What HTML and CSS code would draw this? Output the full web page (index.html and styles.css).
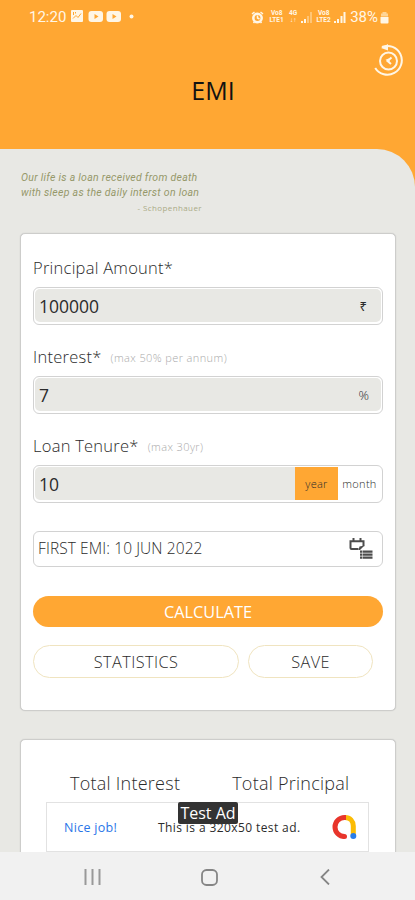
FILE: index.html
```
<!DOCTYPE html>
<html lang="en">

<head>
    <meta charset="UTF-8">
    <meta name="viewport" content="width=device-width, initial-scale=1.0">
    <title>EMI</title>
    <link rel="stylesheet" href="styles.css">
</head>

<body>
    <header class="header">
        <div class="status-bar">
            <span class="time">12:20</span>
            <svg class="status-left" width="66" height="14" viewBox="0 0 66 14">
                <rect x="0" y="1" width="12" height="12" rx="1" fill="#fff6e6"/>
                <path d="M2 9.5l3-3 2 2 3-4M2.500 3v3M4.500 3v1.500" stroke="#ffa733" fill="none"/>
                <rect x="17.500" y="2" width="14.500" height="11" rx="3" fill="#fff6e6"/>
                <path d="M23.500 5v5l4-2.500z" fill="#ffa733"/>
                <rect x="35.500" y="2" width="14.500" height="11" rx="3" fill="#fff6e6"/>
                <path d="M41.500 5v5l4-2.500z" fill="#ffa733"/>
                <circle cx="60.500" cy="7.500" r="2" fill="#fff6e6"/>
            </svg>
            <div class="status-right">
                <svg class="alarm" width="13" height="13" viewBox="0 0 13 13">
                    <circle cx="6.500" cy="7" r="4.200" fill="none" stroke="#fff6e6" stroke-width="2.500"/>
                    <path d="M1 3l2.500-2M12 3L9.500 1M2.500 12l1.500-2M10.500 12L9 10M6.500 4.500V7l2 1" fill="none" stroke="#fff6e6" stroke-width="1.500"/>
                </svg>
                <div class="lte"><span>Vo8</span><span>LTE1</span></div>
                <div class="net"><span>4G</span><span>↓↑</span></div>
                <svg class="signal" width="11" height="12" viewBox="0 0 11 12">
                    <path d="M1 12v-2M4 12V8" stroke="#fff6e6" stroke-width="2"/>
                    <path d="M7 12V5M10 12V1" stroke="#ffd08d" stroke-width="1.500"/>
                </svg>
                <div class="lte"><span>Vo8</span><span>LTE2</span></div>
                <svg class="signal" width="12" height="12" viewBox="0 0 12 12">
                    <path d="M1 12v-2M4 12V8M7.500 12V5M10.500 12V1" stroke="#fff6e6" stroke-width="2"/>
                </svg>
                <span class="percent">38%</span>
                <svg width="9" height="13" viewBox="0 0 9 13">
                    <path d="M2.500 2.500V1h4v1.500H8v3H1v-3z" fill="#ffd596"/>
                    <path d="M0.500 6h8v5.500a1 1 0 0 1-1 1h-6a1 1 0 0 1-1-1z" fill="#fff6e6"/>
                </svg>
            </div>
        </div>
        <h1>EMI</h1>
        <svg class="history" width="32" height="34" viewBox="0 0 32 34">
            <g fill="none" stroke="#fff6e6" stroke-width="2">
                <path d="M9 3A14.400 14.400 0 1 1 2.200 24"/>
                <circle cx="15.500" cy="17" r="8.500"/>
                <path d="M18.500 13.500L14.500 17l3.500 3"/>
            </g>
            <path d="M12.500 15.800l4-1.500v4z" fill="#fff6e6"/>
            <path d="M8 4l7-4v6.500z" fill="#fff6e6"/>
        </svg>
    </header>

    <main class="content">
        <div class="quote">
            <p class="line-one">Our life is a loan received from death</p>
            <p class="line-two">with sleep as the daily interst on loan</p>
            <p class="author">- Schopenhauer</p>
        </div>

        <section class="card">
            <div class="field">
                <div class="label"><span>Principal Amount*</span></div>
                <div class="input"><div class="value"><span>100000</span><span class="unit">₹</span></div></div>
            </div>
            <div class="field">
                <div class="label"><span>Interest*</span><span class="hint">(max 50% per annum)</span></div>
                <div class="input"><div class="value"><span>7</span><span class="unit percent-unit">%</span></div></div>
            </div>
            <div class="field">
                <div class="label"><span>Loan Tenure*</span><span class="hint">(max 30yr)</span></div>
                <div class="input">
                    <div class="value tenure-value"><span>10</span></div>
                    <div class="option selected">year</div>
                    <div class="option">month</div>
                </div>
            </div>

            <div class="date">
                <span>FIRST EMI: 10 JUN 2022</span>
                <svg width="24" height="22" viewBox="0 0 24 22">
                    <path d="M9.500 11H2.500a1 1 0 0 1-1-1V3.200h13v5" fill="none" stroke="#4c4c4c" stroke-width="2"/>
                    <path d="M15.500 7.500L11 12H9.500l1-3.500z" fill="#4c4c4c"/>
                    <path d="M4.500 0v3M11.500 0v3" stroke="#4c4c4c" stroke-width="2"/>
                    <path d="M11 12.500h2.500v2.300H11zM14 12.500h9.500v2.300H14zM11 15.500h2.500v2.300H11zM14 15.500h9.500v2.300H14zM11 18.500h2.500v2.300H11zM14 18.500h9.500v2.300H14z" fill="#4c4c4c"/>
                </svg>
            </div>

            <div class="btn calculate">CALCULATE</div>
            <div class="buttons">
                <div class="btn outline statistics">STATISTICS</div>
                <div class="btn outline save">SAVE</div>
            </div>
        </section>

        <section class="card result">
            <span>Total Interest</span>
            <span>Total Principal</span>
        </section>

        <div class="ad">
            <span class="nice">Nice job!</span>
            <span class="ad-text">This is a 320x50 test ad.</span>
            <svg class="ad-logo" width="26" height="26" viewBox="0 0 26 26">
                <g fill="none" stroke-width="5">
                    <path d="M14 3.500c5 0 8.300 3.800 8.300 8.500v9.500" stroke="#fbbc04"/>
                    <path d="M15 3.500h-1.500a9.500 9.500 0 0 0 0 19" stroke="#e8352b"/>
                </g>
                <circle cx="13.500" cy="22.500" r="2.500" fill="#e8352b"/>
                <circle cx="22.300" cy="22" r="3" fill="#2a7de9"/>
            </svg>
            <span class="ad-badge">Test Ad</span>
        </div>
    </main>

    <nav class="nav-bar">
        <svg width="17" height="16" viewBox="0 0 17 16"><path d="M1.500 0v16M8.500 0v16M15.500 0v16" stroke="#999" stroke-width="2"/></svg>
        <svg class="home" width="17" height="17" viewBox="0 0 17 17"><rect x="1" y="1" width="15" height="15" rx="4.500" fill="none" stroke="#858585" stroke-width="1.800"/></svg>
        <svg width="10" height="16" viewBox="0 0 10 16"><path d="M9 0.500L1.500 8 9 15.500" fill="none" stroke="#858585" stroke-width="1.800"/></svg>
    </nav>
</body>

</html>
```
FILE: styles.css
```
* {
    box-sizing: border-box;
}

body {
    margin: 0;
    height: 900px;
    display: flex;
    flex-direction: column;
    overflow: hidden;
    font-family: "Open Sans", "Noto Sans", sans-serif;
    color: #2b2b2b;
    background-color: #ffa733;
}

h1, p {
    margin: 0;
}

svg {
    display: block;
    flex: none;
}

.header {
    height: 149px;
    flex: none;
    position: relative;
}

.status-bar {
    height: 34px;
    padding: 0 26px 0 29px;
    display: flex;
    align-items: center;
    color: #fff6e6;
    font-family: Roboto, sans-serif;
}

.time {
    width: 42px;
    font-size: 15px;
}

.status-left {
    margin-top: -2px;
}

.status-right {
    margin-left: auto;
    display: flex;
    align-items: center;
}

.lte, .net {
    width: 17px;
    margin-left: 3px;
    display: flex;
    flex-direction: column;
    align-items: center;
    font-size: 6.500px;
    font-weight: bold;
    line-height: 7px;
}

.net {
    width: 10px;
}

.alarm {
    margin-right: 1px;
}

.signal {
    margin-left: 3px;
}

.lte + .signal {
    margin-left: 2px;
}

.percent {
    margin: 0 2px 0 4px;
    font-size: 15px;
}

h1 {
    margin-top: 39px;
    padding-left: 11px;
    line-height: 34px;
    font-size: 25px;
    font-weight: 400;
    text-align: center;
    color: #111;
}

.history {
    position: absolute;
    right: 10px;
    top: 44px;
}

.content {
    position: relative;
    flex: 1;
    min-height: 0;
    overflow: hidden;
    padding: 21px 19px 0 20px;
    background-color: #e8e8e4;
    border-top-right-radius: 38px;
}

.quote {
    height: 63px;
    width: 182px;
    padding-left: 1px;
    color: #96986a;
    font-size: 10.500px;
    line-height: 15px;
    white-space: nowrap;
}

.line-one, .line-two {
    font-family: Roboto, sans-serif;
    font-style: italic;
    letter-spacing: 0.28px;
}

.author {
    font-size: 8px;
    letter-spacing: 0.4px;
    text-align: right;
    color: #aaab86;
}

.card {
    height: 478px;
    padding: 21px 12px 0;
    border: 1px solid #cdcdcb;
    border-radius: 5px;
    background-color: #fff;
    box-shadow: 0 0 1px #bbb;
}

.field {
    margin-bottom: 19px;
}

.label {
    height: 24px;
    margin-bottom: 8px;
    display: flex;
    align-items: center;
    white-space: nowrap;
    font-size: 16.500px;
    font-weight: 300;
    letter-spacing: 0.25px;
}

.hint {
    margin: 3px 0 0 9px;
    font-size: 11px;
    letter-spacing: 0.4px;
    color: #aaa;
}

.input {
    height: 38px;
    padding: 1px 1px 2px;
    display: flex;
    border: 1px solid #d2d2d2;
    border-radius: 6px;
}

.value {
    flex: 1;
    padding: 1px 14px 0 4px;
    display: flex;
    align-items: center;
    justify-content: space-between;
    border-radius: 5px;
    background-color: #e8e8e4;
    font-size: 17.500px;
}

.unit {
    font-size: 13px;
}

.percent-unit {
    margin-right: -2px;
    font-weight: 300;
}

.tenure-value {
    border-radius: 5px 0 0 5px;
}

.option {
    width: 43px;
    display: flex;
    align-items: center;
    justify-content: center;
    font-size: 11px;
    font-weight: 300;
    letter-spacing: 0.3px;
}

.selected {
    background-color: #ffa733;
}

.date {
    height: 36px;
    margin-top: 28px;
    padding: 0 9px 3px 4px;
    display: flex;
    align-items: center;
    justify-content: space-between;
    border: 1px solid #d2d2d2;
    border-radius: 6px;
    font-size: 15.500px;
    font-weight: 300;
    letter-spacing: 0.1px;
}

.date svg {
    margin-top: 2px;
}

.btn {
    display: flex;
    align-items: center;
    justify-content: center;
    border-radius: 17px;
    font-size: 16.300px;
}

.calculate {
    height: 31px;
    margin-top: 29px;
    background-color: #ffa733;
    color: #fff;
}

.buttons {
    margin-top: 18px;
    display: flex;
    gap: 9px;
}

.outline {
    height: 33px;
    padding-top: 1px;
    border: 1px solid #f0e4c0;
    font-weight: 300;
    letter-spacing: 0.4px;
}

.statistics {
    width: 206px;
}

.save {
    width: 125px;
}

.result {
    height: 160px;
    margin-top: 28px;
    padding: 30px 0 0 49px;
    display: flex;
    gap: 52px;
    font-size: 18px;
    font-weight: 300;
    letter-spacing: 0.25px;
    line-height: 26px;
    white-space: nowrap;
}

.ad {
    position: absolute;
    left: 46px;
    bottom: 0;
    width: 323px;
    height: 50px;
    padding: 0 11px 0 17px;
    display: flex;
    align-items: center;
    border: 1px solid #e2e2e2;
    background-color: #fff;
    font-size: 12px;
    white-space: nowrap;
}

.nice {
    width: 94px;
    font-size: 12.500px;
    letter-spacing: 0.3px;
    color: #2a75e8;
}

.ad-text {
    font-size: 12px;
    letter-spacing: 0.4px;
}

.ad-logo {
    margin-left: auto;
}

.ad-badge {
    position: absolute;
    left: 131px;
    top: -1px;
    width: 60px;
    height: 22px;
    border-radius: 2px;
    background-color: #333;
    color: #fff;
    font-size: 16px;
    line-height: 23px;
    text-align: center;
}

.nav-bar {
    height: 48px;
    flex: none;
    padding: 2px 85px 0 84px;
    display: flex;
    align-items: center;
    justify-content: space-between;
    background-color: #f1f1f1;
}

.home {
    margin-right: 3px;
}
```
